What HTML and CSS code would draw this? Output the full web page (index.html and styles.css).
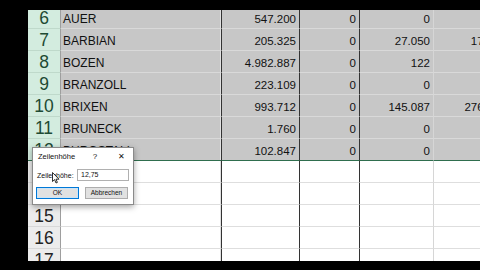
FILE: index.html
```html
<!DOCTYPE html>
<html lang="de">
<head>
<meta charset="utf-8">
<title>Zeilenhöhe</title>
<link rel="stylesheet" href="styles.css">
</head>
<body>
<div class="sheet">
  <div class="grid">
    <div class="rh sel">6</div><div class="c a sel">AUER</div><div class="c b sel num">547.200</div><div class="c cc sel num">0</div><div class="c d sel num">0</div><div class="c e sel num"></div>
    <div class="rh sel">7</div><div class="c a sel">BARBIAN</div><div class="c b sel num">205.325</div><div class="c cc sel num">0</div><div class="c d sel num">27.050</div><div class="c e sel num">17.431</div>
    <div class="rh sel">8</div><div class="c a sel">BOZEN</div><div class="c b sel num">4.982.887</div><div class="c cc sel num">0</div><div class="c d sel num">122</div><div class="c e sel num"></div>
    <div class="rh sel">9</div><div class="c a sel">BRANZOLL</div><div class="c b sel num">223.109</div><div class="c cc sel num">0</div><div class="c d sel num">0</div><div class="c e sel num"></div>
    <div class="rh sel">10</div><div class="c a sel">BRIXEN</div><div class="c b sel num">993.712</div><div class="c cc sel num">0</div><div class="c d sel num">145.087</div><div class="c e sel num">276.540</div>
    <div class="rh sel">11</div><div class="c a sel">BRUNECK</div><div class="c b sel num">1.760</div><div class="c cc sel num">0</div><div class="c d sel num">0</div><div class="c e sel num"></div>
    <div class="rh sel last">12</div><div class="c a sel last">BURGSTALL</div><div class="c b sel last num">102.847</div><div class="c cc sel last num">0</div><div class="c d sel last num">0</div><div class="c e sel last num"></div>
    <div class="rh">13</div><div class="c a"></div><div class="c b"></div><div class="c cc"></div><div class="c d"></div><div class="c e"></div>
    <div class="rh">14</div><div class="c a"></div><div class="c b"></div><div class="c cc"></div><div class="c d"></div><div class="c e"></div>
    <div class="rh">15</div><div class="c a"></div><div class="c b"></div><div class="c cc"></div><div class="c d"></div><div class="c e"></div>
    <div class="rh">16</div><div class="c a"></div><div class="c b"></div><div class="c cc"></div><div class="c d"></div><div class="c e"></div>
    <div class="rh">17</div><div class="c a"></div><div class="c b"></div><div class="c cc"></div><div class="c d"></div><div class="c e"></div>
  </div>

  <div class="dialog">
    <div class="dlg-title">
      <span class="dlg-name">Zeilenhöhe</span>
      <span class="dlg-help">?</span>
      <span class="dlg-close">✕</span>
    </div>
    <div class="dlg-field">
      <span class="dlg-label">Zeilenhöhe:</span>
      <span class="dlg-input">12,75</span>
    </div>
    <div class="dlg-buttons">
      <span class="btn btn-ok">OK</span>
      <span class="btn">Abbrechen</span>
    </div>
    <svg class="cursor" width="8" height="12" viewBox="0 0 8 12"><path d="M0.5 0.5 L0.5 9.5 L2.6 7.6 L4 11 L5.4 10.4 L4 7.2 L7 7.2 Z" fill="#fff" stroke="#000" stroke-width="0.8"/></svg>
  </div>
</div>
</body>
</html>
```
FILE: styles.css
```css
* { box-sizing: border-box; }
html, body { margin: 0; padding: 0; background: #000; }
body {
  width: 480px;
  height: 270px;
  overflow: hidden;
  padding: 10px 0 0 28px;
  font-family: "Liberation Sans", Arial, sans-serif;
}
.sheet {
  position: relative;
  width: 452px;
  height: 251px;
  overflow: hidden;
  background: #fff;
}
.grid {
  display: grid;
  grid-template-columns: 33px 161px 78px 60px 74px 74px;
  grid-auto-rows: 22px;
  margin-top: -3px;
  width: 480px;
}
.rh {
  background: #ececec;
  color: #222;
  font-size: 17.5px;
  line-height: 22px;
  text-align: center;
  border-right: 1px solid #9e9e9e;
  border-bottom: 1px solid #d8d8d8;
}
.rh.sel {
  background: #d3ecdf;
  color: #1e4a33;
  border-bottom: 1px solid #bfd9cb;
}
.c {
  background: #fff;
  border-bottom: 1px solid #dedede;
  font-size: 12px;
  line-height: 22px;
  color: #111;
  padding: 1px 2px 0 2px;
  white-space: nowrap;
  overflow: visible;
}
.c.sel {
  background: #c7c7c7;
  border-bottom: 1px solid #d9d9d9;
}
.c.num { font-size: 11.5px; }
.c.last, .rh.last { border-bottom: 1px solid #2f6e4e; }
.num { text-align: right; padding-right: 3px; }
.a { border-right: 1px solid #333; box-shadow: inset -3px 0 0 -2px #e0e0e0; }
.b { border-right: 1px solid #333; }
.cc { border-right: 1px solid #333; }
.d { border-right: 1px solid #d6d6d6; }
.c.e { padding-right: 2px; }

.dialog {
  position: absolute;
  left: 4px;
  top: 137px;
  width: 102px;
  height: 58px;
  background: #fff;
  border: 1px solid #8a8a8a;
  box-shadow: 0 2px 6px rgba(0,0,0,0.35);
  font-size: 7px;
  color: #111;
  display: flex;
  flex-direction: column;
}
.dlg-title {
  display: flex;
  align-items: center;
  height: 16px;
  padding: 0 0 0 5px;
}
.dlg-name { flex: 1; font-size: 7.5px; }
.dlg-help { width: 14px; text-align: center; font-size: 8px; margin-right: 12px; }
.dlg-close { width: 14px; text-align: center; font-size: 8px; margin-right: 5px; }
.dlg-field {
  display: flex;
  align-items: center;
  gap: 5px;
  margin-top: 5px;
  padding: 0 4px 0 4px;
  height: 12px;
}
.dlg-label { width: 35px; }
.dlg-input {
  flex: 1;
  height: 12px;
  border: 1px solid #b0b0b0;
  padding: 0 3px;
  line-height: 10px;
  font-size: 7px;
}
.dlg-buttons {
  display: flex;
  gap: 6px;
  margin-top: 6px;
  padding: 0 5px 0 3px;
}
.btn {
  width: 43px;
  height: 12px;
  background: #e1e1e1;
  border: 1px solid #adadad;
  text-align: center;
  line-height: 10px;
  font-size: 6.5px;
}
.btn-ok { border: 1px solid #0078d7; box-shadow: inset 0 0 0 1px #cce4f7; }
.cursor {
  position: absolute;
  left: 19px;
  top: 24px;
}
```
